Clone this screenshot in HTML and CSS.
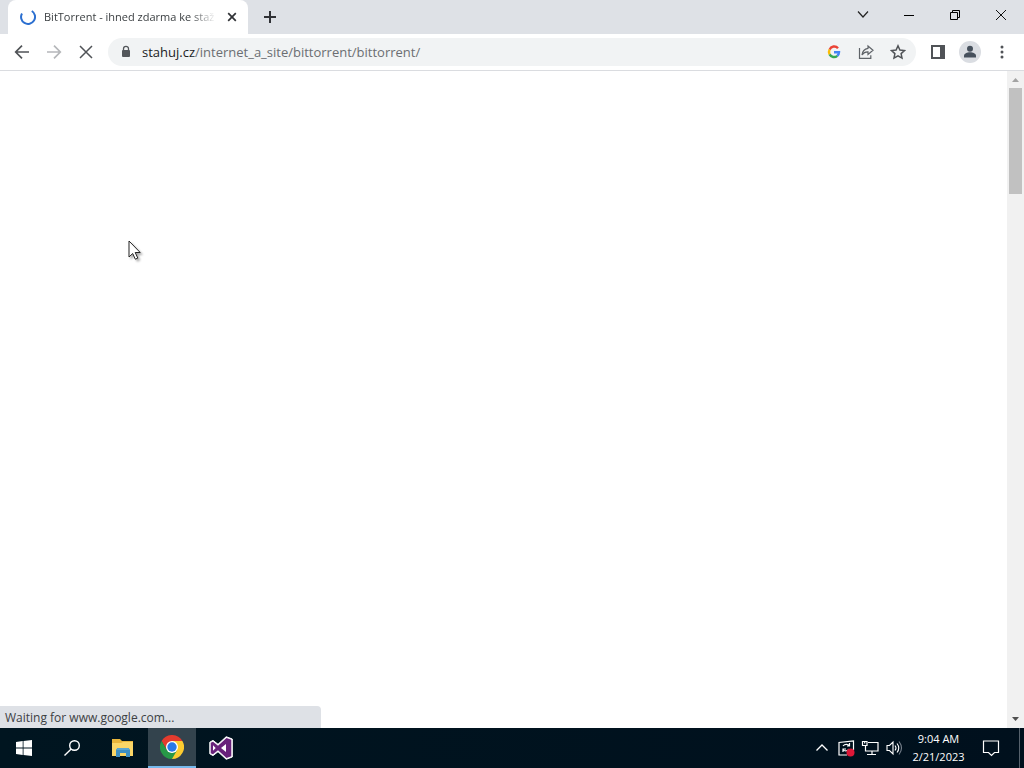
FILE: index.html
```html
<!DOCTYPE html>
<html lang="en">
<head>
<meta charset="utf-8">
<title>BitTorrent - ihned zdarma ke stažení</title>
<link rel="stylesheet" href="styles.css">
</head>
<body>
<div class="desktop">
  <header class="tabstrip">
    <div class="tab">
      <svg class="icon-16" viewBox="0 0 16 16" fill="none" stroke="#2b6fd0" stroke-width="2"><path d="M11.8 2A7 7 0 1 1 2 4.4"/></svg>
      <span class="tab-title">BitTorrent - ihned zdarma ke staž</span>
      <button class="tab-close" aria-label="Close tab"><svg class="icon-16" viewBox="0 0 16 16" stroke="#303236" stroke-width="1.7"><path d="M4.2 4.2l7.6 7.6M11.8 4.2l-7.6 7.6"/></svg></button>
    </div>
    <button class="new-tab" aria-label="New tab"><svg class="icon-16" viewBox="0 0 16 16" stroke="#303236" stroke-width="2"><path d="M8 2v12M2 8h12"/></svg></button>
    <div class="window-controls">
      <button aria-label="Search tabs"><svg class="icon-16" viewBox="0 0 16 16" fill="none" stroke="#222" stroke-width="1.200"><path d="M3 4.500l5 5.500 5-5.500"/></svg></button>
      <button aria-label="Minimize"><svg class="icon-16" viewBox="0 0 16 16" stroke="#000"><path d="M3 8.500h10"/></svg></button>
      <button aria-label="Restore"><svg class="icon-16" viewBox="0 0 16 16" fill="none" stroke="#000"><path d="M3.500 5.500h7v7h-7zM5.500 5.500v-2h7v7h-2"/></svg></button>
      <button aria-label="Close"><svg class="icon-16" viewBox="0 0 16 16" stroke="#111"><path d="M3 3l10 10M13 3L3 13"/></svg></button>
    </div>
  </header>

  <nav class="toolbar" aria-label="Browser">
    <button class="tool" aria-label="Back"><svg class="icon-16" viewBox="0 0 16 16" fill="none" stroke="#505357" stroke-width="1.700"><path d="M15 8H2M8 1.700L1.700 8 8 14.300"/></svg></button>
    <button class="tool" aria-label="Forward"><svg class="icon-16" viewBox="0 0 16 16" fill="none" stroke="#b5b7ba" stroke-width="1.700"><path d="M1 8h13M8 1.700L14.300 8 8 14.300"/></svg></button>
    <button class="tool" aria-label="Stop"><svg class="icon-16" viewBox="0 0 16 16" stroke="#505357" stroke-width="1.500"><path d="M2 2l12 12M14 2L2 14"/></svg></button>
    <div class="omnibox">
      <svg class="icon-16" viewBox="0 0 16 16"><rect x="4" y="6" width="8" height="7" rx="1" fill="#53565a"/><path d="M5.500 6.500V4.800a2.500 2.500 0 0 1 5 0v1.700" fill="none" stroke="#53565a" stroke-width="1.300"/></svg>
      <div class="url" role="textbox" contenteditable="true" aria-label="Address"><span class="host">stahuj.cz</span>/internet_a_site/bittorrent/bittorrent/</div>
      <button class="tool" aria-label="Google"><svg class="icon-16" viewBox="0 0 16 16" fill="none" stroke-width="2.400"><path d="M12 4.200A5 5 0 0 0 3.600 5.600" stroke="#ea4335"/><path d="M3.600 5.600a5 5 0 0 0 0 4.800" stroke="#fbbc05"/><path d="M3.600 10.400A5 5 0 0 0 11.300 11.800" stroke="#34a853"/><path d="M11.300 11.800A5 5 0 0 0 13 8.200H8" stroke="#4285f4"/></svg></button>
      <button class="tool" aria-label="Share"><svg class="icon-16" viewBox="0 0 16 16" fill="none" stroke="#5f6368" stroke-width="1.200"><path d="M1.500 4v10.300h11.300v-3M10 2l5 4.200-5 4.200V7.900C7.500 7.700 5.600 8.700 4 11c.4-3.800 2.400-6.200 6-6.700z"/></svg></button>
      <button class="tool" aria-label="Bookmark"><svg class="icon-16" viewBox="0 0 16 16" fill="none" stroke="#505357" stroke-width="1.500"><path d="M8 1.800l1.900 4.200 4.600.5-3.400 3.100.9 4.500-4-2.300-4 2.300.9-4.500L1.500 6.500l4.600-.5z"/></svg></button>
    </div>
    <button class="tool" aria-label="Side panel"><svg class="icon-16" viewBox="0 0 16 16"><path d="M1 1h14v14H1zM3 3v10h7V3z" fill="#505357" fill-rule="evenodd"/></svg></button>
    <button class="tool" aria-label="Profile"><svg class="icon-22" viewBox="0 0 22 22"><circle cx="11" cy="11" r="11" fill="#dadde2"/><circle cx="11" cy="7.800" r="3" fill="#46505c"/><path d="M5 16.500V15c0-5 12-5 12 0v1.500z" fill="#46505c"/></svg></button>
    <button class="tool" aria-label="Menu"><svg class="icon-16" viewBox="0 0 16 16" fill="#505357"><circle cx="8" cy="3" r="1.500"/><circle cx="8" cy="8" r="1.500"/><circle cx="8" cy="13" r="1.500"/></svg></button>
  </nav>

  <main class="viewport">
    <div class="page"></div>
    <div class="scrollbar">
      <svg class="arrow" viewBox="0 0 17 17"><path d="M5 11l3.500-4 3.500 4z" fill="#a3a3a3"/></svg>
      <div class="track"><div class="thumb"></div></div>
      <svg class="arrow" viewBox="0 0 17 17"><path d="M5 6l3.500 4L12 6z" fill="#505050"/></svg>
    </div>
    <div class="status">Waiting for www.google.com...</div>
    <svg class="cursor" viewBox="0 0 14 21"><path d="M1 1v16l3.700-3.500 2.600 5.700 2.500-1.100-2.600-5.600h5z" fill="#fff" stroke="#222"/></svg>
  </main>

  <footer class="taskbar">
    <button class="task" aria-label="Start"><svg class="icon-16" viewBox="0 0 16 16" fill="#fff"><path d="M0 2l6.700-1v6.500H0zM7.500.9L16 0v7.500H7.500zM0 8.400h6.700V15L0 14zM7.500 8.400H16V16l-8.500-1z"/></svg></button>
    <button class="task" aria-label="Search"><svg class="icon-16" viewBox="0 0 16 16" fill="none" stroke="#fff" stroke-width="1.400"><circle cx="10.500" cy="5.500" r="4.800"/><path d="M7.200 9L.5 15.500"/></svg></button>
    <span class="divider"></span>
    <button class="task" aria-label="File Explorer"><svg class="icon-24" viewBox="0 0 24 24"><path d="M1 3h8l2 2h11v5H1z" fill="#e9b53b"/><path d="M1 7h9l2-1h10v14H1z" fill="#fbd667"/><path d="M5 21v-7l1.500-2h11l1.500 2v7h-4v-4H9v4z" fill="#3e8fc4"/><path d="M6.500 12h11l1.500 2H5z" fill="#5ca6d2"/></svg></button>
    <button class="task active" aria-label="Google Chrome"><svg class="icon-24" viewBox="0 0 24 24"><path d="M12 6h10.400A12 12 0 0 1 12 24l-2-6z" fill="#fccb30"/><path d="M1.600 6A12 12 0 0 1 22.400 6H12l-5.200 9z" fill="#e33b2e"/><path d="M1.600 6l5.200 9 5.200 3 5.200-3L12 24A12 12 0 0 1 1.600 6z" fill="#279847"/><circle cx="12" cy="12" r="6" fill="#fff"/><circle cx="12" cy="12" r="4.700" fill="#2878e8"/></svg></button>
    <button class="task" aria-label="Visual Studio"><svg class="icon-24" viewBox="0 0 24 24"><path d="M.8 6.200l3.200-1.800 5 3.900L17.200.7 23.300 3v18l-6.100 2.300L9 15.700l-5 3.900-3.200-1.800z" fill="#fff" stroke="#fff" stroke-linejoin="round"/><path d="M1.700 6.800L4 5.700l5 4 8.500-7.700 4.800 1.800v16.400L17.500 22 9 14.300l-5 4-2.300-1.100zM4 9.300v5.400L6.700 12zM17 8l-5 4 5 4z" fill="#68217a" fill-rule="evenodd"/></svg></button>
    <div class="tray">
      <button class="tray-button" aria-label="Hidden icons"><svg class="icon-16" viewBox="0 0 16 16" fill="none" stroke="#fff" stroke-width="1.300"><path d="M2.500 10.500L8 5l5.500 5.500"/></svg></button>
      <button class="tray-button" aria-label="Updates"><svg class="icon-18" viewBox="0 0 18 18" fill="none" stroke="#fff" stroke-width="1.200"><path d="M10 16H2V3.500L16.500 2v9M6 7c2-2.500 5-2 6.500-.2M12.500 4v3H10M12 10c-1.500 2.500-4.500 2.500-6 .5M6 13v-3h3"/><circle cx="13.500" cy="13.500" r="4" fill="#df1838" stroke="none"/></svg></button>
      <button class="tray-button" aria-label="Network"><svg class="icon-18" viewBox="0 0 18 18" fill="none" stroke="#fff" stroke-width="1.200"><path d="M7 3.500h10v8.500H4.500V7M11 12v3.500M6 15.500h9M1.500 2.500h4.500v4H1.500zM3.700 2.500v2"/></svg></button>
      <button class="tray-button" aria-label="Volume"><svg class="icon-18" viewBox="0 0 18 18" fill="none" stroke="#fff" stroke-width="1.100"><path d="M2 6.500h2.500L8 3v12l-3.500-3.500H2zM10 6.500q2 2.500 0 5M12 4.500q3.500 4.500 0 9"/><path d="M14 2.500q5 6.500 0 13" stroke="#77818c"/></svg></button>
      <time class="clock" datetime="2023-02-21T09:04"><span>9:04 AM</span><span>2/21/2023</span></time>
      <button class="notifications" aria-label="Notifications"><svg class="icon-18" viewBox="0 0 18 18" fill="none" stroke="#fff" stroke-width="1.200"><path d="M1.500 2h15v11.500h-4L9.500 16.500l-3-3h-5z"/></svg></button>
      <button class="show-desktop" aria-label="Show desktop"></button>
    </div>
  </footer>
</div>
</body>
</html>
```
FILE: styles.css
```css
* { box-sizing: border-box; }

body {
  margin: 0;
  font-family: "Open Sans", "Noto Sans", sans-serif;
  color: #3c4043;
}

button {
  display: flex;
  align-items: center;
  justify-content: center;
  flex: none;
  padding: 0;
  border: 0;
  background: none;
}

svg { display: block; flex: none; }
.icon-16 { width: 16px; height: 16px; }
.icon-18 { width: 18px; height: 18px; }
.icon-22 { width: 22px; height: 22px; }
.icon-24 { width: 24px; height: 24px; }

.desktop {
  display: flex;
  flex-direction: column;
  height: 100vh;
  overflow: hidden;
}

.tabstrip {
  display: flex;
  flex: none;
  height: 34px;
  padding-left: 8px;
  background: #dee1e6;
}

.tab {
  display: flex;
  align-items: center;
  gap: 8px;
  width: 240px;
  padding: 0 8px 0 12px;
  border-radius: 8px 8px 0 0;
  background: #fff;
}

.tab-title {
  flex: 1;
  white-space: nowrap;
  font-size: 11px;
  line-height: 18px;
  mask-image: linear-gradient(to right, #000 85%, transparent);
}

.tab-close { width: 16px; height: 16px; }
.new-tab { width: 44px; }

.window-controls {
  display: flex;
  height: 29px;
  margin-left: auto;
}

.window-controls button { width: 46px; }

.toolbar {
  display: flex;
  align-items: center;
  flex: none;
  height: 37px;
  padding: 0 6px;
  border-bottom: 1px solid #dadce0;
  background: #fff;
}

.tool { width: 32px; height: 28px; }

.omnibox {
  display: flex;
  align-items: center;
  flex: 1;
  height: 28px;
  margin: 0 6px;
  padding: 0 2px 0 10px;
  border-radius: 14px;
  background: #f1f3f4;
}

.url {
  flex: 1;
  padding-left: 8px;
  font-size: 13px;
  line-height: 20px;
  white-space: nowrap;
  color: #6b6e72;
}

.host { color: #202124; }

.viewport {
  position: relative;
  display: flex;
  flex: 1;
  min-height: 0;
  background: #fff;
}

.page { flex: 1; }

.scrollbar {
  display: flex;
  flex-direction: column;
  width: 17px;
  background: #f1f1f1;
}

.arrow { width: 17px; height: 17px; }
.track { flex: 1; padding: 0 2px; }
.thumb { height: 17%; background: #c1c1c1; }

.status {
  position: absolute;
  left: 0;
  bottom: 0;
  width: 321px;
  height: 22px;
  padding-left: 5px;
  border-top-right-radius: 4px;
  background: #dee1e6;
  font-size: 12px;
  line-height: 24px;
}

.cursor {
  position: absolute;
  left: 128px;
  top: 169px;
  width: 14px;
  height: 21px;
  filter: drop-shadow(2px 2px 1px #0005);
}

.taskbar {
  display: flex;
  flex: none;
  height: 40px;
  background: linear-gradient(to right, #001520, #00101d);
  color: #fff;
}

.task { width: 48px; }
.task + .task:nth-child(n + 3) { margin-left: 1px; }
.divider { width: 3px; }

.active {
  border-bottom: 2px solid #76b9ed;
  background: #33434d;
}

.tray {
  display: flex;
  margin-left: auto;
}

.tray-button { width: 24px; }

.clock {
  display: flex;
  flex-direction: column;
  align-items: center;
  justify-content: center;
  width: 65px;
  font-size: 11px;
  line-height: 18px;
}

.notifications { width: 40px; margin-right: 8px; }

.show-desktop {
  width: 5px;
  border-left: 1px solid #56616c;
}
```
